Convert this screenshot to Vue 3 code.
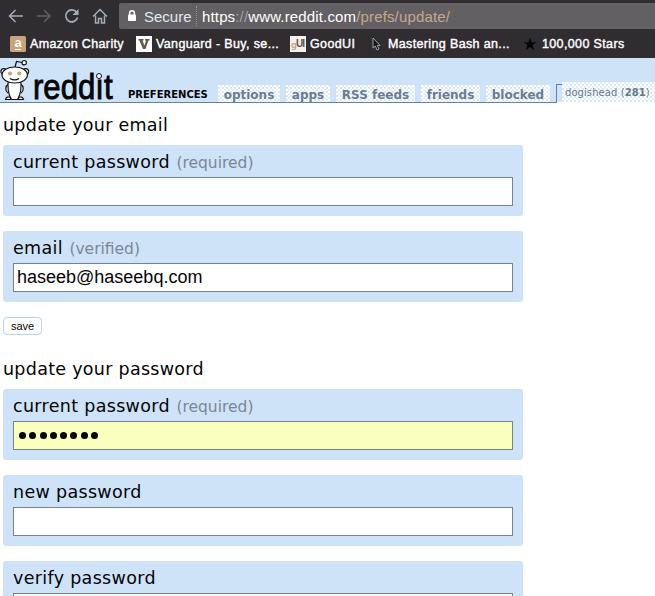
<script setup>
const tabs = [
  { label: 'options', w: 62 },
  { label: 'apps', w: 44 },
  { label: 'RSS feeds', w: 79 },
  { label: 'friends', w: 59 },
  { label: 'blocked', w: 64 },
]
const emailFields = [
  { label: 'current password', note: '(required)', value: '' },
  { label: 'email', note: '(verified)', value: 'haseeb@haseebq.com' },
]
const passwordFields = [
  { label: 'current password', note: '(required)', dots: 8, filled: true },
  { label: 'new password' },
  { label: 'verify password' },
]
</script>

<template>
  <div class="window">
    <div class="toolbar">
      <svg class="nav" width="119" height="32" viewBox="0 0 119 32" fill="none" stroke-width="1.5">
        <path d="M23 16H10M15.5 10L9.5 16l6 6" stroke="#a3adbd" />
        <path d="M37 16h12M44 10l6 6-6 6" stroke="#625f62" />
        <path d="M76.6 12.2A6 6 0 1 0 77.6 17.5" stroke="#a8aeb8" stroke-width="1.7" />
        <path d="M78.5 9v6h-6z" fill="#a8aeb8" />
        <path d="M93 16.5L100 9.500l7 7M95.500 15.500V23h3v-4.500h3V23h3v-7.500" stroke="#a3adbd" />
      </svg>
      <div class="address">
        <svg class="lock" width="10" height="14" viewBox="0 0 10 14"><path d="M2.700 6V4a2.300 2.300 0 0 1 4.600 0v2" fill="none" stroke="#fff" stroke-width="1.600" /><rect x="1" y="5.500" width="8" height="6.500" rx=".8" fill="#fff" /></svg>
        <span class="secure">Secure</span>
        <span class="divider"></span>
        <span class="url">https<i>://</i>www.reddit.com<em>/prefs/update/</em></span>
      </div>
    </div>
    <div class="bookmarks">
      <div class="bm b1"><svg width="16" height="16" viewBox="0 0 16 16"><rect width="16" height="16" rx="1.500" fill="#c9a37c" /><text x="8" y="10.500" text-anchor="middle" font-size="13" font-weight="bold" fill="#fff">a</text><path d="M5 13.500h6" stroke="#fff" /></svg><span>Amazon Charity</span></div>
      <div class="bm b2"><svg width="16" height="16" viewBox="0 0 16 16"><rect width="16" height="16" fill="#fff" /><path d="M2.500 3h5v1.500H6.500l2 5 1.500-5H9V3h4.500v1.500h-1L9.500 13H7L3.500 4.500h-1z" fill="#625b50" /></svg><span>Vanguard - Buy, se...</span></div>
      <div class="bm b3"><svg width="16" height="16" viewBox="0 0 16 16"><rect width="16" height="16" fill="#f3f1ed" /><text x="1" y="12" font-size="9.500" font-weight="bold" fill="#c6a27c">g</text><text x="6" y="11" font-size="10" font-weight="bold" fill="#555" textLength="9">UI</text></svg><span>GoodUI</span></div>
      <div class="bm b4"><svg width="16" height="16" viewBox="0 0 16 16"><path d="M5 2v10l2.300-2 1.700 4 2-1-1.800-3.600H12z" fill="#171519" stroke="#a7adb8" stroke-width=".9" /></svg><span>Mastering Bash an...</span></div>
      <div class="bm b5"><svg width="16" height="16" viewBox="0 0 16 16"><path d="M8 1.500l1.500 4.700h5L10.500 9l1.500 5-4-3-4 3 1.500-5-4-2.800h5z" fill="#050505" /></svg><span>100,000 Stars</span></div>
    </div>
    <header class="site">
      <div class="bar">
        <svg class="alien" width="31" height="44" viewBox="0 0 31 44" fill="#fff" stroke="#111" stroke-width="1.200">
          <path d="M15 9l1.500-5.500 5.500 1" fill="none" />
          <circle cx="24.200" cy="4.700" r="2.200" />
          <circle cx="3.800" cy="13.500" r="2.900" /><circle cx="25.700" cy="13.500" r="2.900" />
          <path d="M8.500 26c-3.500 2-3.500 7-.5 9M20.500 26c3.500 2 3.500 7 .5 9" />
          <path d="M5.500 41.500c.5-2.500 3-3 5-2v2zM23.500 41.500c-.5-2.500-3-3-5-2v2z" />
          <path d="M8.500 22c-1.500 7 0 15 3 19.500h6c3-4.500 4.500-12.500 3-19.500z" />
          <ellipse cx="14.700" cy="17" rx="12.700" ry="8" />
          <circle cx="10" cy="15.500" r="2.100" fill="#d3a070" stroke="none" /><circle cx="19.300" cy="15.500" r="2.100" fill="#d3a070" stroke="none" />
          <path d="M10 20.500c3 1.800 6.500 1.800 9 0" fill="none" />
        </svg>
        <div class="logo"><span>reddıt</span><i></i></div>
        <div class="title">PREFERENCES</div>
        <nav class="tabs">
          <a v-for="t in tabs" :key="t.label" class="tab dither" :style="{ width: t.w + 'px' }">{{ t.label }}</a>
        </nav>
      </div>
      <div class="corner"></div>
      <div class="user dither">dogishead (<b>281</b>)</div>
    </header>
    <main>
      <h1>update your email</h1>
      <section v-for="f in emailFields" :key="f.label" class="field">
        <div class="label"><span>{{ f.label }}</span><small>{{ f.note }}</small></div>
        <div class="input">{{ f.value }}</div>
      </section>
      <button>save</button>
      <h1 class="second">update your password</h1>
      <section v-for="f in passwordFields" :key="f.label" class="field">
        <div class="label"><span>{{ f.label }}</span><small v-if="f.note">{{ f.note }}</small></div>
        <div :class="['input', { filled: f.filled }]"><i v-for="n in f.dots || 0" :key="n" class="dot"></i></div>
      </section>
    </main>
  </div>
</template>

<style>
body { margin: 0; overflow: hidden; }
</style>
<style scoped>
* { box-sizing: border-box; }
i, em { font-style: normal; }
.window { width: 655px; height: 596px; overflow: hidden; background: #fff; font-family: "DejaVu Sans", Verdana, sans-serif; color: #050505; }
.toolbar { display: flex; height: 29px; background: #2f2d2f; font-family: "Liberation Sans", Arial, sans-serif; }
.nav { flex: none; }
.address { flex: 1; margin-top: 3px; height: 26px; background: #636063; border-radius: 2px 0 0 2px; display: flex; align-items: center; color: #fff; font-size: 15px; white-space: nowrap; }
.lock { margin-left: 8px; }
.secure { width: 46px; margin-left: 7px; color: #e0e8f2; }
.divider { height: 20px; margin-left: 6px; border-left: 1px dotted #8b929c; }
.url { margin-left: 5px; color: #fff; letter-spacing: .15px; }
.url i { color: #9da1a8; }
.url em { color: #c4a88c; }
.bookmarks { height: 29px; display: flex; align-items: center; padding-left: 10px; background: #2f2d2f; color: #fff; font: 12.5px "Liberation Sans", Arial, sans-serif; letter-spacing: .36px; -webkit-text-stroke: .4px #fff; }
.bm { display: flex; align-items: center; gap: 4px; flex: none; white-space: nowrap; }
.bm svg { flex: none; -webkit-text-stroke: 0; letter-spacing: 0; }
.b1 { width: 126px; } .b2 { width: 154px; } .b3 { width: 78px; } .b4 { width: 154px; }
.site { height: 45px; display: flex; align-items: flex-end; background: linear-gradient(#cee3f8 44px, #fff 44px); white-space: nowrap; }
.bar { display: flex; align-items: flex-end; flex: none; width: 556px; height: 45px; border-bottom: 1px solid #69809c; }
.alien { flex: none; width: 31px; }
.logo { position: relative; width: 97px; height: 44px; padding-left: 2px; flex: none; }
.logo span { display: inline-block; font: 35px/57px "Liberation Sans", Arial, sans-serif; -webkit-text-stroke: .9px #050505; transform: scaleX(.89); transform-origin: 0 0; }
.logo i { position: absolute; left: 64.500px; top: 15px; width: 6px; height: 6px; border: 1.500px solid #111; border-radius: 50%; background: #fff; }
.title { width: 90px; font-size: 10px; font-weight: bold; line-height: 13px; padding-bottom: 1px; flex: none; }
.tabs { display: flex; gap: 6px; }
.dither { background: conic-gradient(#e2eefb 25%, #fff 0 50%, #d6e8fa 0 75%, #fff 0) 0 0 / 4px 4px; }
.tab { height: 17px; text-align: center; font-size: 12px; font-weight: bold; line-height: 20px; color: #6b7b91; }
.corner { width: 6px; height: 19px; border: solid #69809c; border-width: 1px 0 0 1px; flex: none; }
.user { height: 20px; margin-bottom: 1px; padding: 3px 0 0 3px; flex: 1; color: #687789; font-size: 10px; line-height: 15px; letter-spacing: .07px; }
main { padding-left: 3px; }
h1 { margin: 0; height: 42px; font-size: 17.5px; font-weight: normal; line-height: 44px; letter-spacing: .28px; }
h1.second { margin-top: 12px; }
.field { width: 520px; height: 71px; margin-bottom: 15px; padding: 5px 10px 10px; background: #cee3f8; border-radius: 3px; }
.label { height: 27px; font-size: 17.5px; line-height: 24px; letter-spacing: .32px; }
small { margin-left: 6.5px; font-size: 15.5px; letter-spacing: 0; color: #7d8794; }
.input { height: 29px; padding-left: 3px; display: flex; align-items: center; background: #fff; border: 1px solid #758493; font: 18px "Liberation Sans", Arial, sans-serif; }
.filled { background: #faffbd; gap: 3.25px; padding-left: 5px; }
.dot { width: 7px; height: 7px; border-radius: 50%; background: #050505; }
button { display: block; width: 39px; height: 18px; padding: 0; border: 1px solid #bdd3ea; border-radius: 4px; background: #fff; font: 11px "Liberation Sans", sans-serif; color: #050505; }
</style>
